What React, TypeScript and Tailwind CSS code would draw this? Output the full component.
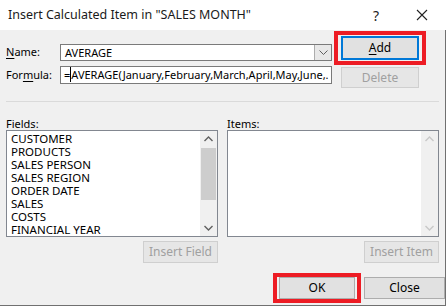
export default function App() {
  const fields = [
    "CUSTOMER",
    "PRODUCTS",
    "SALES PERSON",
    "SALES REGION",
    "ORDER DATE",
    "SALES",
    "COSTS",
    "FINANCIAL YEAR",
  ];

  return (
    <div className="w-[446px] h-[306px] flex flex-col bg-[#f0f0f0] text-[11px] text-black overflow-hidden font-['Noto_Sans',sans-serif]">
      {/* title bar */}
      <div className="h-[30px] bg-white flex items-center pl-[8px] shrink-0">
        <span className="text-[12.5px] text-[#1a1a1a]">Insert Calculated Item in "SALES MONTH"</span>
        <span className="ml-auto text-[14px] text-[#222] mr-[37px]">?</span>
        <svg width="12" height="12" viewBox="0 0 12 12" className="mr-[18px]">
          <path d="M1 1 L11 11 M11 1 L1 11" stroke="#222" strokeWidth="1.1" />
        </svg>
      </div>

      <div className="flex-1 flex flex-col border-r border-b border-[#707070]">
        {/* name + formula + add/delete */}
        <div className="flex pl-[6px] h-[71px]">
          <div className="flex flex-col w-[326px] pt-[14px] gap-[5px]">
            <div className="flex items-center h-[17px]">
              <span className="w-[54px]">
                <u className="underline-offset-2">N</u>ame:
              </span>
              <div className="flex-1 h-[17px] flex bg-white border border-[#7a7a7a]">
                <span className="pl-[4px] leading-[15px]">AVERAGE</span>
                <div className="ml-auto w-[17px] h-full bg-[#e8e8e8] border-l border-[#adadad] flex items-center justify-center">
                  <svg width="9" height="6" viewBox="0 0 9 6">
                    <path d="M0.5 0.5 L4.5 4.5 L8.5 0.5" fill="none" stroke="#606060" strokeWidth="1" />
                  </svg>
                </div>
              </div>
            </div>
            <div className="flex items-center h-[18px]">
              <span className="w-[54px]">
                For<u className="underline-offset-2">m</u>ula:
              </span>
              <div className="flex-1 h-[18px] bg-white border border-[#7a7a7a] overflow-hidden whitespace-nowrap pl-[3px] leading-[16px]">
                =<span className="border-l border-black">AVERAGE(January,February,March,April,May,June,.</span>
              </div>
            </div>
          </div>
          <div className="flex flex-col ml-[2px] pt-[1px]">
            <div className="w-[92px] h-[34px] border-[4px] border-[#ed1c24] flex items-center justify-center">
              <button className="w-[78px] h-[24px] bg-[#e1e1e1] border-2 border-[#0078d7] text-[12px] leading-none">
                <u className="underline-offset-2">A</u>dd
              </button>
            </div>
            <button className="ml-[7px] mt-[2px] w-[78px] h-[21px] bg-[#e6e6e6] border border-[#cfcfcf] text-[#a0a0a0] text-[12px] leading-none">
              Delete
            </button>
          </div>
        </div>

        {/* separator */}
        <div className="ml-[6px] w-[433px] h-px bg-[#dadada]" />

        {/* fields and items */}
        <div className="flex pl-[6px] mt-[15px]">
          <div className="flex flex-col w-[212px]">
            <span className="leading-[13px] h-[13px]">
              <u className="underline-offset-2">F</u>ields:
            </span>
            <div className="h-[107px] bg-white border border-[#828790] flex">
              <div className="flex-1 pl-[4px] pt-[1px] flex flex-col">
                {fields.map((f) => (
                  <span key={f} className="leading-[13px] h-[13px] text-[11.5px]">
                    {f}
                  </span>
                ))}
              </div>
              <div className="w-[17px] bg-[#f0f0f0] flex flex-col items-center">
                <svg width="17" height="17" viewBox="0 0 17 17">
                  <path d="M4.5 10 L8.5 6 L12.5 10" fill="none" stroke="#606060" strokeWidth="1.4" />
                </svg>
                <div className="w-[15px] h-[52px] bg-[#cdcdcd]" />
                <div className="flex-1" />
                <svg width="17" height="17" viewBox="0 0 17 17">
                  <path d="M4.5 7 L8.5 11 L12.5 7" fill="none" stroke="#606060" strokeWidth="1.4" />
                </svg>
              </div>
            </div>
            <button className="self-end mt-[4px] w-[75px] h-[22px] bg-[#e6e6e6] border border-[#cfcfcf] text-[#a0a0a0] text-[12px] leading-none">
              Insert Field
            </button>
          </div>

          <div className="flex flex-col w-[212px] ml-[9px]">
            <span className="leading-[13px] h-[13px]">
              <u className="underline-offset-2">I</u>tems:
            </span>
            <div className="h-[107px] bg-white border border-[#828790] flex">
              <div className="flex-1" />
              <div className="w-[17px] bg-[#f0f0f0] flex flex-col items-center justify-between">
                <svg width="17" height="17" viewBox="0 0 17 17">
                  <path d="M4.5 10 L8.5 6 L12.5 10" fill="none" stroke="#c8c8c8" strokeWidth="1.4" />
                </svg>
                <svg width="17" height="17" viewBox="0 0 17 17">
                  <path d="M4.5 7 L8.5 11 L12.5 7" fill="none" stroke="#c8c8c8" strokeWidth="1.4" />
                </svg>
              </div>
            </div>
            <button className="self-end mt-[4px] w-[75px] h-[22px] bg-[#e6e6e6] border border-[#cfcfcf] text-[#a0a0a0] text-[12px] leading-none">
              Insert Item
            </button>
          </div>
        </div>

        {/* ok / close */}
        <div className="flex items-center justify-end mt-[10px]">
          <div className="w-[88px] h-[30px] border-[4px] border-[#ed1c24] flex items-center justify-center">
            <button className="w-[76px] h-[22px] bg-[#e1e1e1] border border-[#adadad] text-[12px] leading-none">OK</button>
          </div>
          <button className="ml-[3px] w-[81px] h-[22px] bg-[#e1e1e1] border border-[#adadad] text-[12px] leading-none">Close</button>
        </div>
      </div>
    </div>
  );
}
